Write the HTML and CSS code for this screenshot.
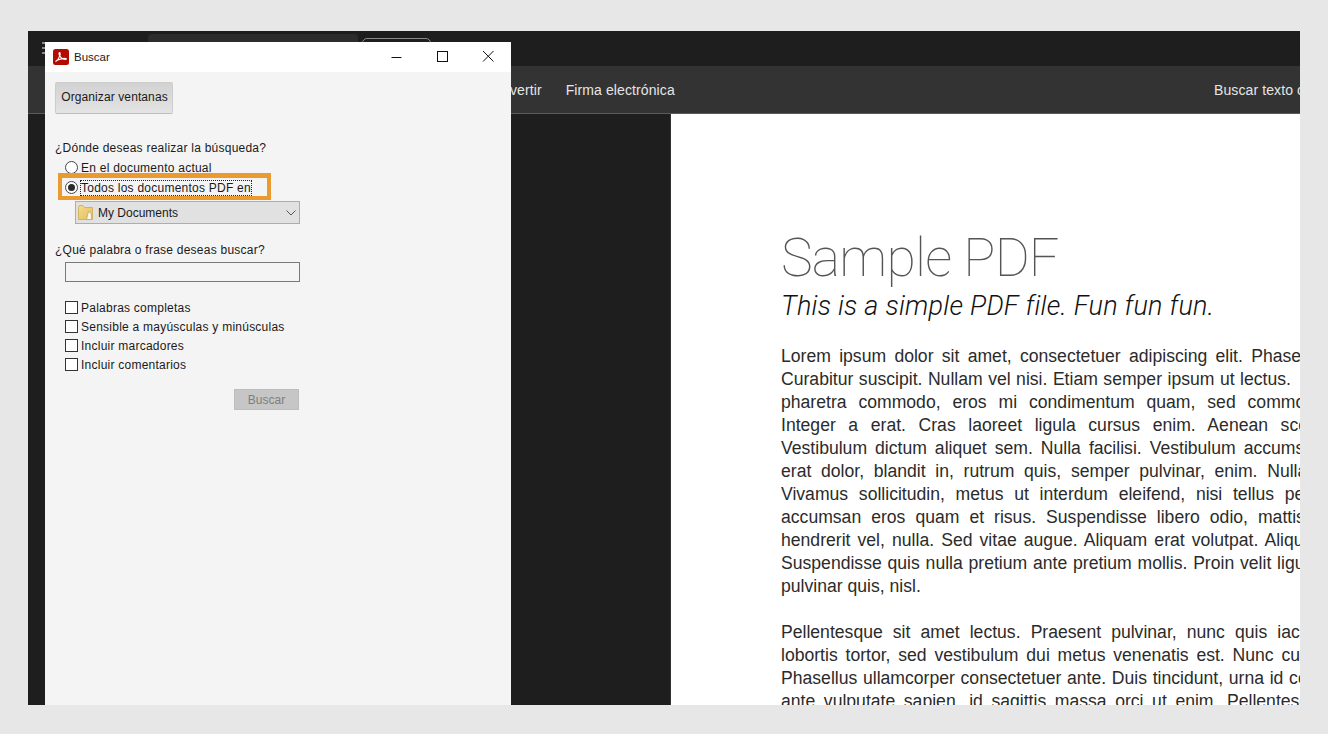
FILE: index.html
```html
<!DOCTYPE html>
<html lang="es">
<head>
<meta charset="utf-8">
<title>Buscar</title>
<link rel="stylesheet" href="styles.css">
</head>
<body>
<div class="app">
  <div class="tabbar">
    <div class="menu-dots"><i></i><i></i><i></i></div>
    <div class="tab-dark"></div>
    <div class="tab-outline"></div>
  </div>
  <div class="toolbar">
    <div class="tools-left"><span>Convertir</span><span>Firma electrónica</span></div>
    <span class="tool-right">Buscar texto o herramientas</span>
  </div>
  <div class="workspace">
    <div class="sidegap"></div>
    <div class="sheet">
      <h1 class="pdf-title">Sample PDF</h1>
      <p class="pdf-sub">This is a simple PDF file. Fun fun fun.</p>
      <p class="pdf-body">
        <span class="ln ws-a">Lorem ipsum dolor sit amet, consectetuer adipiscing elit. Phasellus hendrerit.</span>
        <span class="ln ws-b">Curabitur suscipit. Nullam vel nisi. Etiam semper ipsum ut lectus.</span>
        <span class="ln ws-c">pharetra commodo, eros mi condimentum quam, sed commodo justo quam ut velit.</span>
        <span class="ln ws-d">Integer a erat. Cras laoreet ligula cursus enim. Aenean scelerisque velit et tellus.</span>
        <span class="ln ws-e">Vestibulum dictum aliquet sem. Nulla facilisi. Vestibulum accumsan ante vitae elit.</span>
        <span class="ln ws-f">erat dolor, blandit in, rutrum quis, semper pulvinar, enim. Nullam varius congue.</span>
        <span class="ln ws-g">Vivamus sollicitudin, metus ut interdum eleifend, nisi tellus pellentesque elit, tristique</span>
        <span class="ln ws-h">accumsan eros quam et risus. Suspendisse libero odio, mattis sit amet, aliquet eget,</span>
        <span class="ln ws-i">hendrerit vel, nulla. Sed vitae augue. Aliquam erat volutpat. Aliquam feugiat vulputate.</span>
        <span class="ln ws-m">Suspendisse quis nulla pretium ante pretium mollis. Proin velit ligula, sagittis at, egestas a,</span>
        <span class="ln">pulvinar quis, nisl.</span>
      </p>
      <p class="pdf-body">
        <span class="ln ws-j">Pellentesque sit amet lectus. Praesent pulvinar, nunc quis iaculis sagittis, justo quam</span>
        <span class="ln ws-k">lobortis tortor, sed vestibulum dui metus venenatis est. Nunc cursus ligula. Nulla facilisi.</span>
        <span class="ln ws-l">Phasellus ullamcorper consectetuer ante. Duis tincidunt, urna id condimentum luctus, nibh</span>
        <span class="ln ws-n">ante vulputate sapien, id sagittis massa orci ut enim. Pellentesque vestibulum convallis.</span>
      </p>
    </div>
  </div>
</div>

<div class="dialog">
  <div class="titlebar">
    <svg class="acro" viewBox="0 0 16 16" width="16" height="16"><rect width="16" height="16" rx="2.5" fill="#b30b00"/><path d="M3 12.300c1.600-1 3.200-3.600 4-6.200.3-1 .2-2.600-.5-2.600-.8 0-.5 2 .2 3.300 1 1.800 2.900 3.700 5.800 3.700 1 0 1.300-.7.500-.9-1.800-.5-5.700.3-8.300 1.500C3.400 11.700 2.500 12.600 3 12.300z" fill="none" stroke="#fff" stroke-width="1.100"/></svg>
    <span class="title-text">Buscar</span>
    <div class="win-controls">
      <svg viewBox="0 0 46 30" width="46" height="30"><path d="M18.500 15.500h10" stroke="#111" fill="none"/></svg>
      <svg viewBox="0 0 46 30" width="46" height="30"><rect x="18.500" y="9.500" width="10" height="10" stroke="#111" fill="none"/></svg>
      <svg viewBox="0 0 46 30" width="46" height="30"><path d="M18 9l10.500 10.500M28.500 9L18 19.500" stroke="#111" fill="none"/></svg>
    </div>
  </div>
  <div class="dialog-body">
    <button class="arrange" type="button">Organizar ventanas</button>
    <div class="q q-where">¿Dónde deseas realizar la búsqueda?</div>
    <div class="opt-row"><span class="radio"></span><span>En el documento actual</span></div>
    <div class="opt-row opt-selected">
      <span class="radio on"></span><span class="focus-label">Todos los documentos PDF en</span>
      <div class="highlight"></div>
    </div>
    <div class="combo">
      <svg class="folder" viewBox="0 0 16 17" width="16" height="17"><defs><linearGradient id="fg" x1="0" y1="0" x2="1" y2="1"><stop offset="0" stop-color="#f6dc8c"/><stop offset="1" stop-color="#e3bd5c"/></linearGradient></defs><path d="M.5 3.500Q.5 1.500 2 1.500H5l1.500 2H14.500V15.500H.5z" fill="url(#fg)" stroke="#d2b465"/><path d="M8.500 15.500L10.500 7.500l3 2.500V15.500z" fill="#fbf6e2" stroke="#a89a70" stroke-width=".6"/></svg>
      <span class="combo-text">My Documents</span>
      <svg class="chev" viewBox="0 0 10 6" width="10" height="6"><path d="M.5.500l4.500 4.500L9.500.500" fill="none" stroke="#555"/></svg>
    </div>
    <div class="q q-what">¿Qué palabra o frase deseas buscar?</div>
    <div class="search-input"></div>
    <div class="checks">
      <div class="check-row"><span class="check"></span><span>Palabras completas</span></div>
      <div class="check-row"><span class="check"></span><span>Sensible a mayúsculas y minúsculas</span></div>
      <div class="check-row"><span class="check"></span><span>Incluir marcadores</span></div>
      <div class="check-row"><span class="check"></span><span>Incluir comentarios</span></div>
    </div>
    <div class="search-row"><button class="search-btn" type="button" disabled>Buscar</button></div>
  </div>
</div>
</body>
</html>
```
FILE: styles.css
```css
* { box-sizing: border-box; }
html, body { margin: 0; height: 100%; }
body { width: 1328px; height: 734px; background: #e7e7e7; overflow: hidden; padding: 31px 28px 29px; position: relative; font-family: "Liberation Sans", Arial, sans-serif; }
.app { width: 1272px; height: 674px; display: flex; flex-direction: column; overflow: hidden; background: #1e1e1e; }
.tabbar { height: 35px; background: #1e1e1e; display: flex; align-items: flex-start; flex: none; padding-left: 14px; }
.menu-dots { width: 3px; margin-top: 11px; display: flex; flex-direction: column; gap: 3px; flex: none; }
.menu-dots i { display: block; width: 3px; height: 2px; background: #8a8a8a; }
.tab-dark { width: 210px; height: 32px; margin: 3px 0 0 103px; background: #2c2c2c; border-radius: 4px 4px 0 0; }
.tab-outline { width: 69px; height: 20px; margin: 7px 0 0 4px; border: 1px solid #8a8a8a; border-radius: 5px; }
.toolbar { height: 48px; flex: none; background: #333; border-bottom: 1px solid #5a5a5a; display: flex; align-items: center; justify-content: space-between; color: #e6e6e6; font-size: 14px; letter-spacing: .1px; padding-left: 456px; white-space: nowrap; overflow: hidden; }
.tools-left { display: flex; gap: 24px; }
.tool-right { position: absolute; left: 1214px; width: 86px; overflow: hidden; }
.workspace { flex: 1; display: flex; min-height: 0; }
.sidegap { width: 643px; flex: none; border-right: 1px solid #333; }
.sheet { flex: 1; min-width: 0; background: #fff; padding: 113px 0 0 110px; overflow: hidden; color: #2b2b2b; }
.pdf-title { margin: 0; font-family: Roboto, "Liberation Sans", sans-serif; font-weight: 100; font-size: 53.5px; line-height: 61px; letter-spacing: -.8px; color: #555; white-space: nowrap; }
.pdf-sub { margin: 0; font-family: Roboto, "Liberation Sans", sans-serif; font-weight: 300; font-style: italic; font-size: 27px; line-height: 36px; letter-spacing: .25px; color: #111; white-space: nowrap; }
.pdf-body { margin: 23px 0 0; font-size: 17.6px; line-height: 23px; width: 560px; }
.pdf-sub + .pdf-body { margin-top: 21px; }
.ln { display: block; white-space: nowrap; }
.ws-a { word-spacing: 3.4px; }
.ws-b { word-spacing: .6px; }
.ws-c { word-spacing: 7px; }
.ws-d { word-spacing: 7.7px; }
.ws-e { word-spacing: 3.1px; }
.ws-f { word-spacing: 4.8px; }
.ws-g { word-spacing: 5.8px; }
.ws-h { word-spacing: 5.1px; }
.ws-i { word-spacing: 2.2px; }
.ws-j { word-spacing: 5.2px; }
.ws-k { word-spacing: 2.9px; }
.ws-l { word-spacing: .8px; }
.ws-m { word-spacing: .9px; }
.ws-n { word-spacing: 3.7px; }
.dialog { position: absolute; left: 45px; top: 42px; width: 466px; height: 663px; background: #f4f4f4; font-size: 12px; letter-spacing: .24px; color: #1a1a1a; }
.titlebar { height: 30px; background: #fff; display: flex; align-items: center; padding-left: 8px; letter-spacing: 0; }
.acro { display: block; }
.title-text { margin-left: 5px; font-size: 11.5px; }
.win-controls { margin-left: auto; display: flex; }
.win-controls svg { display: block; }
.dialog-body { padding: 10px 0 0 10px; }
.arrange { display: block; width: 118px; height: 32px; padding: 0 0 2px 1px; background: linear-gradient(#d2d2d2, #e4e4e4); border: 1px solid #cdcdcd; border-bottom-color: #bdbdbd; border-radius: 2px; font: 12px "Liberation Sans", Arial, sans-serif; letter-spacing: .1px; color: #1a1a1a; }
.q { line-height: 14px; white-space: nowrap; }
.q-where { margin-top: 27px; }
.opt-row { display: flex; align-items: center; height: 19px; margin-left: 10px; gap: 3px; position: relative; margin-top: 3px; white-space: nowrap; }
.opt-row + .opt-row { margin-top: 1px; }
.radio { width: 13px; height: 13px; border: 1px solid #444; border-radius: 50%; background: #fff; flex: none; display: flex; align-items: center; justify-content: center; }
.radio.on::after { content: ""; width: 7px; height: 7px; border-radius: 50%; background: #2a2a2a; }
.focus-label { outline: 1px dotted #222; outline-offset: 0; line-height: 14px; }
.highlight { position: absolute; left: -7px; top: -5px; width: 213px; height: 27px; border-style: solid; border-color: #ea9a2f; border-width: 5px 4px 4px; }
.combo { margin: 4px 0 0 20px; width: 225px; height: 23px; background: #e1e1e1; border: 1px solid #adadad; display: flex; align-items: center; padding-left: 2px; letter-spacing: 0; }
.folder { display: block; flex: none; }
.combo-text { margin-left: 4px; }
.chev { margin-left: auto; margin-right: 3px; display: block; }
.q-what { margin-top: 19px; }
.search-input { margin: 5px 0 0 10px; width: 235px; height: 20px; background: #f4f4f4; border: 1px solid #7a7a7a; }
.checks { margin: 19px 0 0 10px; display: flex; flex-direction: column; gap: 6px; }
.check-row { display: flex; align-items: center; height: 13px; gap: 3px; white-space: nowrap; }
.check { width: 13px; height: 13px; border: 1px solid #333; background: #fff; flex: none; }
.search-row { width: 244px; display: flex; justify-content: flex-end; margin-top: 18px; }
.search-btn { width: 65px; height: 21px; padding: 0; background: #c6c6c6; border: 1px solid #bdbdbd; color: #7f7f7f; font: 12px "Liberation Sans", Arial, sans-serif; }
```
